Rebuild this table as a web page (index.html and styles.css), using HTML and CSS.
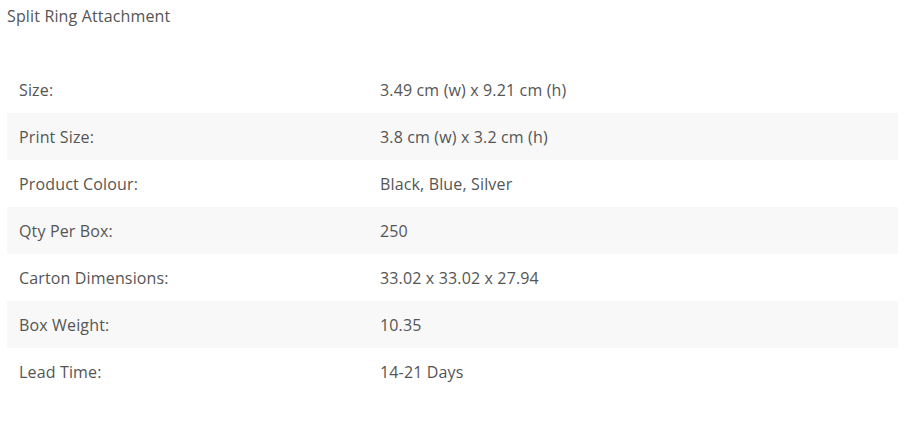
FILE: index.html
```html
<!DOCTYPE html>
<html>
<head>
<meta charset="utf-8">
<link rel="stylesheet" href="styles.css">
</head>
<body>
<div class="page">
  <h1 class="title">Split Ring Attachment</h1>
  <table class="specs">
    <tr><td class="label">Size:</td><td>3.49 cm (w) x 9.21 cm (h)</td></tr>
    <tr><td class="label">Print Size:</td><td>3.8 cm (w) x 3.2 cm (h)</td></tr>
    <tr><td class="label">Product Colour:</td><td>Black, Blue, Silver</td></tr>
    <tr><td class="label">Qty Per Box:</td><td>250</td></tr>
    <tr><td class="label">Carton Dimensions:</td><td>33.02 x 33.02 x 27.94</td></tr>
    <tr><td class="label">Box Weight:</td><td>10.35</td></tr>
    <tr><td class="label">Lead Time:</td><td>14-21 Days</td></tr>
  </table>
</div>
</body>
</html>
```
FILE: styles.css
```css
html, body {
  margin: 0;
  padding: 0;
  background: #fff;
}
body {
  font-family: "Open Sans", "Liberation Sans", sans-serif;
  color: #555;
  font-size: 16px;
  letter-spacing: 0.15px;
}
.page {
  padding: 6px 8px 0 7px;
}
.title {
  margin: 0;
  font-size: 16px;
  font-weight: normal;
  line-height: 20px;
  color: #555;
}
.specs {
  margin-top: 40px;
  width: 100%;
  border-collapse: collapse;
}
.specs td {
  height: 47px;
  padding: 0 12px;
  box-sizing: border-box;
  line-height: 20px;
  vertical-align: middle;
}
.specs td.label {
  width: 361px;
}
.specs tr:nth-child(even) td {
  background: #f8f8f8;
}
```
